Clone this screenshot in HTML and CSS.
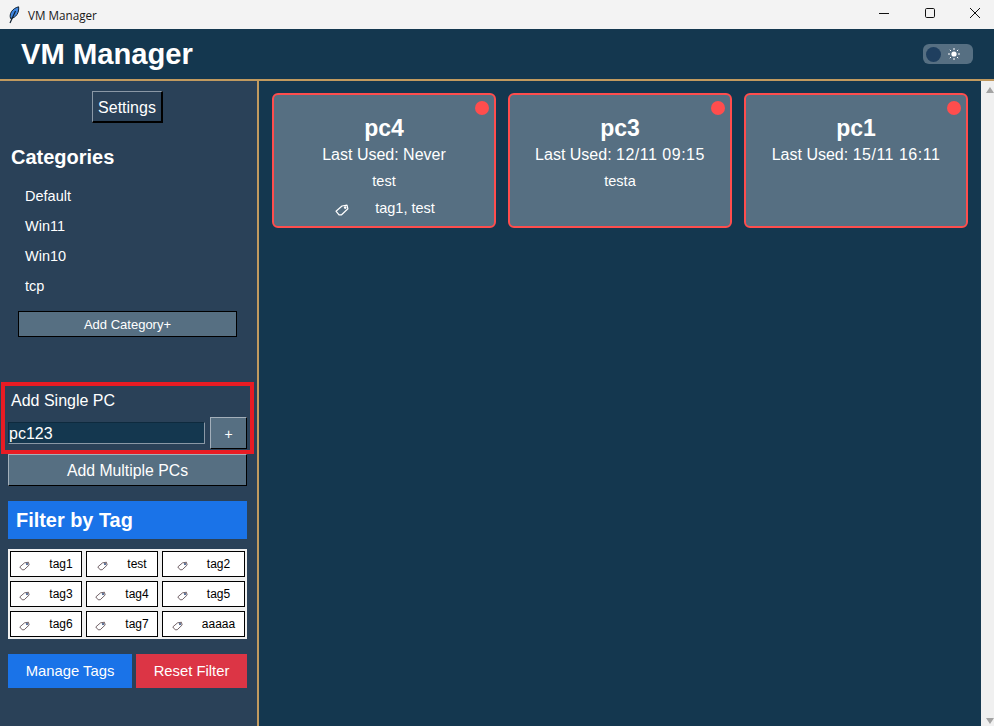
FILE: index.html
```html
<!DOCTYPE html>
<html lang="en">
<head>
  <meta charset="UTF-8"/>
  <meta name="viewport" content="width=device-width,initial-scale=1"/>
  <title>VM Manager</title>
  <link rel="stylesheet" href="styles.css">
</head>
<body>

  <svg class="defs" width="0" height="0">
    <symbol id="tag" viewBox="0 0 14 12">
      <path d="M1 7.2 L7 2 L12 1.2 L12.9 4.8 L6.6 10.8 L4 10.8 Z" fill="none" stroke="currentColor" stroke-width="1.2" stroke-linejoin="round"/>
      <circle cx="10.2" cy="3.6" r="1.3" style="fill:var(--tip, currentColor)"/>
    </symbol>
  </svg>

  <div class="titlebar">
    <svg class="feather" width="12" height="18" viewBox="0 0 12 18">
      <path d="M2.6 12.5 C1 8 4 2.5 10.6 0.8 C11.4 6.5 8 12 2.6 12.5 Z" fill="#3f86e0" stroke="#10202f" stroke-width="1"/>
      <path d="M7.5 5 L2 17" stroke="#10202f" stroke-width="1.2" fill="none"/>
    </svg>
    <span class="titlebar-text">VM Manager</span>
    <div class="win-controls">
      <svg width="10" height="10" viewBox="0 0 10 10"><path d="M0 5.5 H10" stroke="#111" stroke-width="1"/></svg>
      <svg width="10" height="10" viewBox="0 0 10 10"><rect x="0.5" y="0.5" width="9" height="9" rx="1.2" fill="none" stroke="#111" stroke-width="1"/></svg>
      <svg width="10" height="10" viewBox="0 0 10 10"><path d="M0 0 L10 10 M10 0 L0 10" stroke="#111" stroke-width="1"/></svg>
    </div>
  </div>

  <header class="app-header">
    <h1>VM Manager</h1>
    <div class="theme-toggle">
      <span class="knob"></span>
      <svg class="sun" width="12" height="12" viewBox="0 0 12 12">
        <circle cx="6" cy="6" r="2.6" fill="#fff"/>
        <path d="M6 0 V2 M6 10 V12 M0 6 H2 M10 6 H12 M1.8 1.8 L3 3 M9 9 L10.2 10.2 M1.8 10.2 L3 9 M9 3 L10.2 1.8" stroke="#fff" stroke-width="1"/>
      </svg>
    </div>
  </header>

  <div class="content">
    <aside class="sidebar">
      <button class="btn-settings">Settings</button>
      <h2 class="cat-title">Categories</h2>
      <ul class="cat-list">
        <li>Default</li>
        <li>Win11</li>
        <li>Win10</li>
        <li>tcp</li>
      </ul>
      <button class="btn-add-cat">Add Category+</button>

      <div class="add-single">
        <div class="add-label">Add Single PC</div>
        <div class="add-row">
          <div class="pc-input">pc123</div>
          <button class="btn-plus">+</button>
        </div>
        <span class="highlight"></span>
      </div>
      <button class="btn-multi">Add Multiple PCs</button>

      <div class="filter-title">Filter by Tag</div>
      <div class="tag-grid">
        <div class="tag-cell"><svg class="tag-icon"><use href="#tag"/></svg><span>tag1</span></div>
        <div class="tag-cell"><svg class="tag-icon"><use href="#tag"/></svg><span>test</span></div>
        <div class="tag-cell"><svg class="tag-icon"><use href="#tag"/></svg><span>tag2</span></div>
        <div class="tag-cell"><svg class="tag-icon"><use href="#tag"/></svg><span>tag3</span></div>
        <div class="tag-cell"><svg class="tag-icon"><use href="#tag"/></svg><span>tag4</span></div>
        <div class="tag-cell"><svg class="tag-icon"><use href="#tag"/></svg><span>tag5</span></div>
        <div class="tag-cell"><svg class="tag-icon"><use href="#tag"/></svg><span>tag6</span></div>
        <div class="tag-cell"><svg class="tag-icon"><use href="#tag"/></svg><span>tag7</span></div>
        <div class="tag-cell"><svg class="tag-icon"><use href="#tag"/></svg><span>aaaaa</span></div>
      </div>

      <div class="filter-actions">
        <button class="btn-manage">Manage Tags</button>
        <button class="btn-reset">Reset Filter</button>
      </div>
    </aside>

    <main class="cards">
      <div class="card">
        <span class="status-dot"></span>
        <div class="card-name">pc4</div>
        <div class="card-used">Last Used: Never</div>
        <div class="card-note">test</div>
        <div class="card-tags"><svg class="card-tag-icon"><use href="#tag"/></svg><span>tag1, test</span></div>
      </div>
      <div class="card">
        <span class="status-dot"></span>
        <div class="card-name">pc3</div>
        <div class="card-used">Last Used: <span class="date">12/11 09:15</span></div>
        <div class="card-note">testa</div>
      </div>
      <div class="card">
        <span class="status-dot"></span>
        <div class="card-name">pc1</div>
        <div class="card-used">Last Used: <span class="date">15/11 16:11</span></div>
      </div>
    </main>

    <div class="scrollbar">
      <span class="arrow-up"></span>
      <span class="arrow-down"></span>
    </div>
  </div>

</body>
</html>
```

FILE: styles.css
```css
html, body {
  margin:0; padding:0; height:100%; overflow:hidden;
  font-family:"Liberation Sans", Arial, sans-serif; color:#fff;
}
body { display:flex; flex-direction:column; background:#14374f; }
.defs { position:absolute; }
button { font-family:inherit; color:#fff; padding:2px 0 0; border-radius:0; }

/* window title bar */
.titlebar {
  height:29px; flex:none; display:flex; align-items:center;
  background:#f3f3f3; color:#1a1a1a; padding-left:8px;
}
.feather { flex:none; }
.titlebar-text { margin-left:8px; font:11.7px "Open Sans", sans-serif; }
.win-controls { margin-left:auto; display:flex; gap:35.5px; padding:0 14px 3px 0; }

/* app header */
.app-header {
  height:50px; flex:none; display:flex; align-items:center; justify-content:space-between;
  background:#14374f; border-bottom:2px solid #c19a5f; padding:0 21px;
}
.app-header h1 { margin:0; font-size:29.2px; font-weight:bold; }
.theme-toggle {
  width:50px; height:20px; background:#566f82; border-radius:6px;
  display:flex; align-items:center; padding-left:3px; box-sizing:border-box;
}
.knob { width:15px; height:15px; border-radius:50%; background:#1f3f5f; }
.sun { margin-left:7px; }

.content { flex:1; display:flex; min-height:0; }

/* sidebar */
.sidebar {
  width:257px; flex:none;
  background:#2a4158; border-right:2px solid #c19a5f;
  display:flex; flex-direction:column; align-items:flex-start;
}
.btn-settings {
  margin:10px 0 0 92px; width:71px; height:32px; font-size:16px;
  background:#2a4158;
  border:1px solid; border-color:#8a98a6 #000 #000 #8a98a6;
  border-width:1px 2px 2px 1px;
}
.cat-title { margin:22px 0 0 11px; font-size:20px; line-height:24px; font-weight:bold; }
.cat-list { list-style:none; margin:12px 0 0; padding:0; }
.cat-list li { height:30px; line-height:30px; padding-left:25px; font-size:14.5px; }
.btn-add-cat {
  margin:10px 0 0 18px; width:219px; height:26px; font-size:13px; padding:0;
  background:#566f82; border:1px solid #000;
}

.add-single { position:relative; margin:45px 0 0 0; width:254px; height:72px; }
.add-label { padding:10px 0 0 11px; font-size:16px; line-height:18px; }
.add-row { display:flex; align-items:center; margin:7px 0 0 8px; gap:5px; }
.pc-input {
  width:197px; height:22px; box-sizing:border-box;
  background:#14374f; font-size:16px; line-height:22px;
  border:1px solid; border-color:#0e2a3e #8a98a6 #8a98a6 #0e2a3e;
}
.btn-plus {
  width:37px; height:32px; font-size:14px; background:#566f82;
  border:1px solid; border-color:#a3afba #000 #000 #a3afba;
}
/* red annotation box from the screenshot */
.highlight {
  position:absolute; left:1px; top:0; right:0; bottom:0;
  border:4px solid #e81c24; pointer-events:none;
}
.btn-multi {
  margin:0 0 0 8px; width:239px; height:32px; font-size:15.8px;
  background:#566f82;
  border:1px solid; border-color:#a3afba #000 #000 #a3afba;
}

.filter-title {
  margin:15px 0 0 8px; width:239px; height:38px; box-sizing:border-box;
  background:#1a73e8; font-size:19.9px; font-weight:bold; line-height:39px; padding-left:8px;
}
.tag-grid {
  margin:10px 0 0 8px; width:239px; box-sizing:border-box; padding:2px;
  background:#f0f0f0;
  display:grid; grid-template-columns:72px 72px 83px; grid-auto-rows:26px; gap:4px;
}
.tag-cell {
  background:#fff; border:1px solid #000; color:#000; font-size:12px;
  display:flex; align-items:center; justify-content:center; gap:19px;
}
.tag-icon { width:11px; height:10px; margin-top:4px; color:#6a5a60; --tip:#34507f; }

.filter-actions { display:flex; gap:4px; margin:15px 0 0 8px; }
.filter-actions button { height:34px; border:none; font-size:14.8px; padding:0; }
.btn-manage { width:124px; background:#1a73e8; }
.btn-reset { width:111px; background:#dc3545; }

/* pc cards */
.cards {
  flex:1; display:flex; align-items:flex-start; gap:12px;
  padding:12px 0 0 13px; min-width:0;
}
.card {
  position:relative; width:224px; height:135px; box-sizing:border-box;
  background:#566f82; border:2px solid #ff4d4d; border-radius:6px;
  text-align:center; padding-top:20px;
}
.status-dot {
  position:absolute; top:6px; right:5px;
  width:14px; height:14px; border-radius:50%; background:#ff4d4d;
}
.card-name { font-size:23px; font-weight:bold; line-height:26px; }
.card-used { font-size:16px; line-height:18px; margin-top:5px; }
.date { letter-spacing:.5px; }
.card-note { font-size:14.5px; line-height:18px; margin-top:8px; }
.card-tags {
  display:flex; align-items:center; justify-content:center; gap:26px;
  font-size:14.5px; line-height:18px; margin-top:9px; padding-left:2px;
}
.card-tag-icon { width:14px; height:12px; margin-top:3px; color:#fff; }

/* scrollbar */
.scrollbar {
  width:13px; flex:none; background:#f0f0f0;
  display:flex; flex-direction:column; justify-content:space-between; align-items:flex-end;
  padding:6px 0 2px; box-sizing:border-box;
}
.arrow-up, .arrow-down { width:0; height:0; border-left:4px solid transparent; border-right:4px solid transparent; }
.arrow-up { border-bottom:6px solid #a3a3a3; }
.arrow-down { border-top:6px solid #a3a3a3; }
```
